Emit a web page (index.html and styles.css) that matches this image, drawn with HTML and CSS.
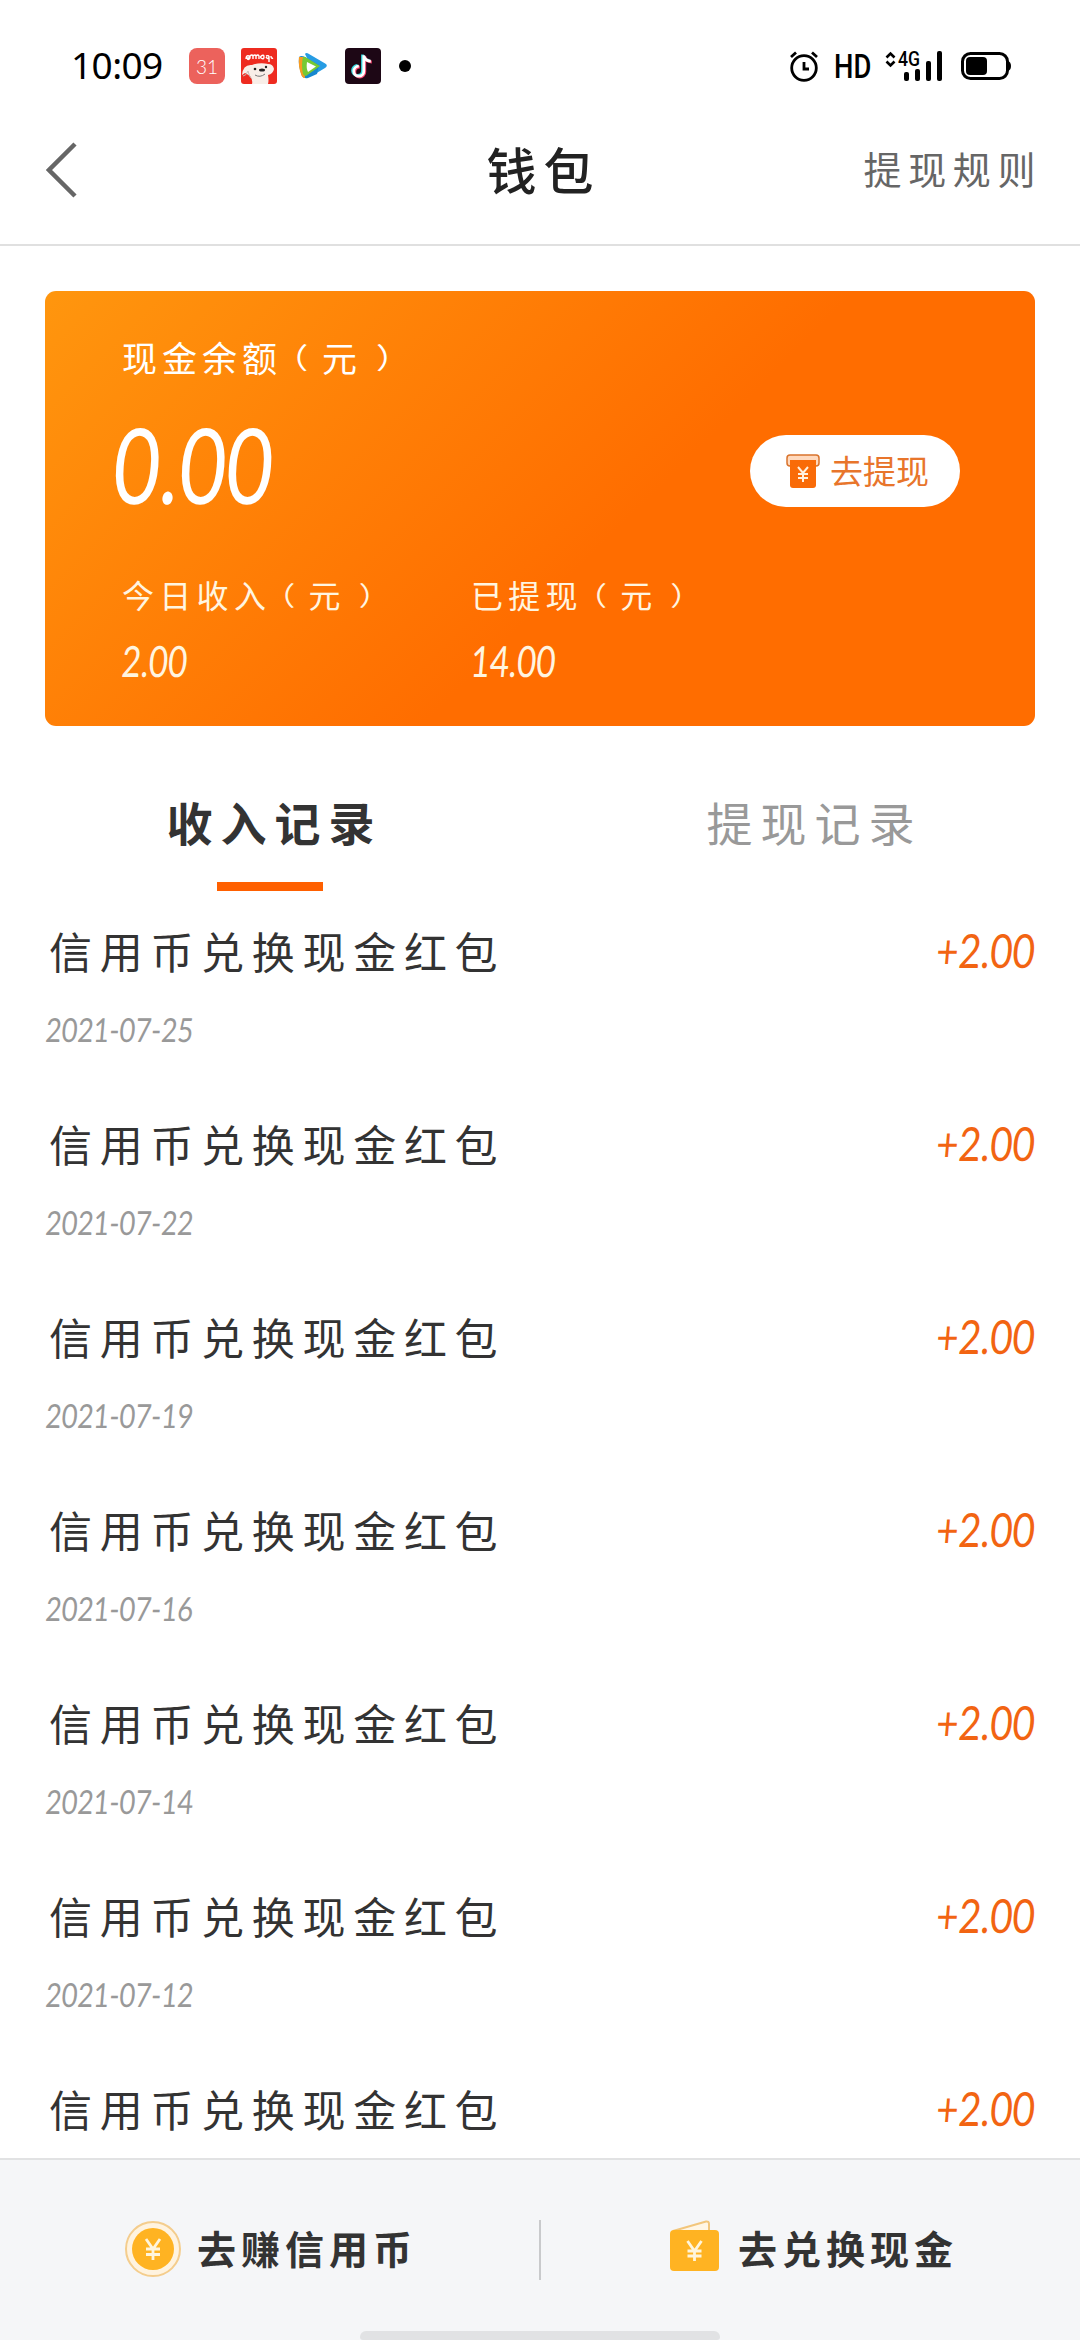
FILE: index.html
```html
<!DOCTYPE html>
<html lang="zh-CN">
<head>
<meta charset="utf-8">
<title>钱包</title>
<link rel="stylesheet" href="styles.css">
</head>
<body>
<div class="screen">
  <div class="status">
    <span class="clock">10:09</span>
    <div class="apps">
      <span class="calendar">31</span>
      <svg class="app" viewBox="0 0 36 36"><rect width="36" height="36" rx="3" fill="#ee2b20"/><path d="M5 11q0-4 3-3 2 2-2 2 1 3 3 0V8q2-2 3 0v3V8q2-2 3 0v3V8q2-2 3 0v3M20 8q3-2 3 1t-3 1q-1-2 1-2M25 8q3-1 3 1-1 3-3 0m3-1v6M30 8q0 3 2 2" fill="none" stroke="#fff" stroke-width="1.4"/><path d="M1 27q1-11 10-10 8-3 16-1 5 0 6 5-1 5-6 6 1 6 0 9H11q1-4-2-8-3-2-5-3z" fill="#f8eee8"/><path d="M2 28q3 0 5-5 1 6 4 8" fill="none" stroke="#c9bcb8" stroke-width="1"/><circle cx="14" cy="21" r="1.3" fill="#222"/><ellipse cx="21" cy="22" rx="3" ry="1.5" fill="#222"/><circle cx="25" cy="19" r="1.2" fill="#222"/><path d="M14 27q5 3 10-1" fill="none" stroke="#777"/></svg>
      <svg class="app" viewBox="0 0 36 36"><path d="M12 6Q13 4 16 6L33 16Q35 18 32 20L22 26Z" fill="#279ce3"/><path d="M6 9Q8 7 12 9L26 17 24 26 15 30Q11 31 9 28Q5 18 6 9Z" fill="#1687cf"/><path d="M6 9l5 0 1 21q-3 0-4-4-3-8-2-17z" fill="#f89b20"/><path d="M10 9Q11 8 14 10L27 18 13 28Q11 28 10 26Q8 17 10 9Z" fill="#76c934"/><path d="M14 14l9 4.500-8 5.500q-2-4-1-10z" fill="#fff"/></svg>
      <svg class="app" viewBox="0 0 36 36"><rect width="36" height="36" rx="4" fill="#1d0715"/><g fill="none" stroke-width="2.800"><path d="M19 7v16a5 5 0 1 1-5-5M19 8q2 5 7 5" stroke="#35d8e0" transform="translate(-1.500 -.5)"/><path d="M19 7v16a5 5 0 1 1-5-5M19 8q2 5 7 5" stroke="#f1426d" transform="translate(.8 1)"/><path d="M19 7v16a5 5 0 1 1-5-5M19 8q2 5 7 5" stroke="#fff" transform="translate(-.2 .2)"/></g></svg>
    </div>
    <span class="more"></span>
    <div class="system">
      <svg class="alarm" viewBox="0 0 30 32"><g fill="none" stroke="#000" stroke-width="2.800"><circle cx="15" cy="18" r="12.300"/><path d="M15 12v7h5M2 7l5-4.500M28 7l-5-4.500"/></g></svg>
      <span class="hd">HD</span>
      <svg class="signal" viewBox="0 0 58 32"><path d="M1.500 7.500l4-4 4 4M1.500 11.500l4 4 4-4" fill="none" stroke="#000" stroke-width="2.600"/><text class="net" x="13" y="15.500" textLength="22" lengthAdjust="spacingAndGlyphs">4G</text><g><rect x="19" y="22" width="5" height="9" rx="2"/><rect x="30" y="19" width="5" height="12" rx="2"/><rect x="41" y="11" width="5" height="20" rx="2"/><rect x="52" y="1" width="5" height="30" rx="2"/></g></svg>
      <svg class="battery" viewBox="0 0 50 28"><rect x="1.500" y="1.500" width="45" height="25" rx="8" fill="none" stroke="#000" stroke-width="3"/><rect x="5" y="5" width="21" height="18" rx="4"/><path d="M47 9q3 1 3 5t-3 5z"/></svg>
    </div>
  </div>

  <header class="nav">
    <svg class="back" viewBox="0 0 32 56"><path d="M29 2L3 28l26 26" fill="none" stroke="#666" stroke-width="4.500"/></svg>
    <h1 class="title">钱包</h1>
    <span class="rules">提现规则</span>
  </header>

  <main class="content">
    <section class="card">
      <div class="label balance-label">现金余额<span class="paren">（</span>元<span class="paren close">）</span></div>
      <div class="balance-row">
        <span class="balance"><span class="num">0.00</span></span>
        <div class="withdraw">
          <svg class="withdraw-icon" viewBox="0 0 34 35"><rect x="1" y="1" width="32" height="11" rx="3" fill="#ffd9bd" stroke="#d9732c" stroke-width="1.500"/><path d="M4 6h26v25q0 3-3 3H7q-3 0-3-3z" fill="#f96b08"/><path d="M12 13l5 6 5-6M17 19v9M12 20h10M12 24h10" fill="none" stroke="#fff0df" stroke-width="2"/></svg>
          <span>去提现</span>
        </div>
      </div>
      <div class="stats">
        <div class="stat"><div class="label">今日收入<span class="paren">（</span>元<span class="paren close">）</span></div><div class="value"><span class="num">2.00</span></div></div>
        <div class="stat"><div class="label">已提现<span class="paren">（</span>元<span class="paren close">）</span></div><div class="value"><span class="num">14.00</span></div></div>
      </div>
    </section>

    <div class="tabs">
      <div class="tab active"><span>收入记录</span></div>
      <div class="tab"><span>提现记录</span></div>
    </div>

    <div class="records">
      <div class="record"><div class="line"><span class="name">信用币兑换现金红包</span><span class="amount">+2.00</span></div><div class="date"><span class="num">2021-07-25</span></div></div>
      <div class="record"><div class="line"><span class="name">信用币兑换现金红包</span><span class="amount">+2.00</span></div><div class="date"><span class="num">2021-07-22</span></div></div>
      <div class="record"><div class="line"><span class="name">信用币兑换现金红包</span><span class="amount">+2.00</span></div><div class="date"><span class="num">2021-07-19</span></div></div>
      <div class="record"><div class="line"><span class="name">信用币兑换现金红包</span><span class="amount">+2.00</span></div><div class="date"><span class="num">2021-07-16</span></div></div>
      <div class="record"><div class="line"><span class="name">信用币兑换现金红包</span><span class="amount">+2.00</span></div><div class="date"><span class="num">2021-07-14</span></div></div>
      <div class="record"><div class="line"><span class="name">信用币兑换现金红包</span><span class="amount">+2.00</span></div><div class="date"><span class="num">2021-07-12</span></div></div>
      <div class="record"><div class="line"><span class="name">信用币兑换现金红包</span><span class="amount">+2.00</span></div></div>
    </div>
  </main>

  <footer class="actions">
    <div class="action">
      <svg class="coin" viewBox="0 0 58 58"><circle cx="29" cy="29" r="27" fill="#fff3df" stroke="#f4cd8d" stroke-width="2"/><circle cx="29" cy="29" r="21" fill="#ffb322"/><path d="M22 19l7 10 7-10M29 29v11M22 29h14M22 34.500h14" fill="none" stroke="#fff5dc" stroke-width="2.800"/></svg>
      <span>去赚信用币</span>
    </div>
    <div class="divider"></div>
    <div class="action exchange">
      <svg class="wallet" viewBox="0 0 50 52"><path d="M3 11L36 1.500q3-.5 3 2.500v8" fill="#fff6e5" stroke="#f2c67c" stroke-width="2"/><rect x="0" y="10" width="49" height="41" rx="4" fill="#ffb322"/><path d="M17.500 21l7 10 7-10M24.500 31v10M17.500 31h14M17.500 36h14" fill="none" stroke="#fff5dc" stroke-width="2.800"/></svg>
      <span>去兑换现金</span>
    </div>
    <div class="home"></div>
  </footer>
</div>
</body>
</html>
```
FILE: styles.css
```css
* { box-sizing: border-box; }
body {
  margin: 0;
  background: #fff;
  color: #333;
  font-family: "Noto Sans CJK SC", sans-serif;
}
svg { display: block; flex: none; }
.screen {
  width: 1080px;
  height: 2340px;
  display: flex;
  flex-direction: column;
  overflow: hidden;
}
.status {
  height: 96px;
  padding: 36px 69px 0 71px;
  display: flex;
  align-items: flex-start;
  color: #000;
}
.clock {
  width: 118px;
  font: 400 37px/58px "Noto Sans", sans-serif;
  letter-spacing: -.6px;
}
.apps { display: flex; gap: 16px; padding-top: 12px; }
.app { width: 36px; height: 36px; }
.calendar {
  width: 36px;
  height: 36px;
  border-radius: 8px;
  background: #ec625c;
  color: #fff;
  font: 300 19px/37px Lato, sans-serif;
  text-align: center;
}
.more {
  width: 12px;
  height: 12px;
  margin: 24px 0 0 18px;
  border-radius: 50%;
  background: #000;
}
.system { display: flex; margin-left: auto; padding-top: 14px; }
.alarm { width: 30px; height: 32px; }
.hd {
  width: 36px;
  margin: 0 15px 0 15px;
  font: 500 33px/34px Roboto, sans-serif;
  transform: scaleX(.83);
  transform-origin: left;
}
.signal { width: 58px; height: 32px; overflow: visible; }
.net { font: 500 20px Roboto, sans-serif; }
.battery { width: 50px; height: 28px; margin: 2px 0 0 18px; }

.nav {
  height: 150px;
  padding: 0 38px 0 46px;
  display: grid;
  grid-template-columns: 1fr auto 1fr;
  align-items: center;
  border-bottom: 2px solid #e0e0e0;
}
.back { width: 32px; height: 56px; }
.title {
  margin: -5px 0 0 -1px;
  font-size: 50px;
  font-weight: 500;
  line-height: 60px;
  letter-spacing: 7px;
  color: #222;
}
.rules {
  justify-self: end;
  margin-top: -4px;
  font-size: 38px;
  line-height: 50px;
  letter-spacing: 6.600px;
  color: #666;
}

.content { height: 1912px; overflow: hidden; }
.card {
  height: 435px;
  margin: 45px 45px 0;
  padding: 42px 75px 0 77px;
  border-radius: 11px;
  background: linear-gradient(135deg, #ff960e 0%, #ff6d00 57%);
  color: #fff;
}
.label { white-space: nowrap; color: #fff5e0; font-size: 32px; line-height: 48px; letter-spacing: 5.300px; }
.balance-label { font-size: 35px; letter-spacing: 5px; color: #fff; }
.paren {
  display: inline-block;
  margin: 0 .25em;
  font-feature-settings: "halt";
  line-height: 1;
  transform: scaleY(.82);
}
.close { margin: 0 .1em 0 .4em; }
.num, .amount { display: inline-block; font-family: Lato, sans-serif; transform: scaleX(.77) skewX(-6deg); transform-origin: left; }
.balance-row { height: 180px; display: flex; align-items: center; justify-content: space-between; margin-bottom: 9px; }
.balance { width: 200px; margin: -22px 0 0 -8px; font-size: 105px; line-height: 120px; }
.withdraw {
  width: 210px;
  height: 72px;
  border-radius: 36px;
  background: #fff;
  display: flex;
  align-items: center;
  padding-left: 36px;
  gap: 10px;
  color: #e8752b;
  font-size: 33px;
  line-height: 36px;
}
.withdraw span { margin-top: -3px; }
.withdraw-icon { width: 34px; height: 35px; }
.stats { display: grid; grid-template-columns: 349px 1fr; }
.value { margin-top: 14px; font-size: 43px; line-height: 52px; color: #fff5e0; }

.tabs { height: 165px; display: grid; grid-template-columns: 1fr 1fr; }
.tab {
  display: flex;
  flex-direction: column;
  align-items: center;
  padding: 60px 0 0 9px;
  font-size: 46px;
  line-height: 70px;
  letter-spacing: 8px;
  color: #999;
}
.active { color: #333; font-weight: 700; }
.active::after { content: ""; width: 106px; height: 9px; margin: 26px 9px 0 0; background: #ff6000; }

.record { height: 193px; padding: 24px 45px 0 49px; }
.line { display: flex; justify-content: space-between; align-items: center; height: 70px; }
.name { font-size: 43px; line-height: 70px; letter-spacing: 7.700px; }
.amount { font-size: 47px; line-height: 70px; color: #f26412; transform-origin: right; transform: scaleX(.82) skewX(-6deg); }
.date { height: 40px; margin: 23px 0 0 -3px; font-size: 33px; line-height: 40px; color: #999; }
.date .num { transform: scaleX(.83) skewX(-6deg); }

.actions {
  height: 182px;
  border-top: 2px solid #e1e2e3;
  background: #f5f6f8;
  display: grid;
  grid-template-columns: 539px 2px 539px;
  grid-template-rows: 171px 9px;
}
.action {
  display: flex;
  align-items: center;
  padding: 7px 0 0 124px;
  gap: 15px;
  font-size: 39px;
  font-weight: 700;
  letter-spacing: 5px;
}
.action span { margin-top: -5px; }
.exchange { padding-left: 129px; gap: 18px; }
.coin { width: 58px; height: 58px; }
.wallet { width: 50px; height: 52px; margin-top: -6px; }
.divider { height: 60px; margin-top: 60px; background: #c9cacc; }
.home { grid-column: 1 / -1; justify-self: center; width: 360px; height: 9px; border-radius: 6px 6px 3px 3px; background: #e1e2e4; }
```
